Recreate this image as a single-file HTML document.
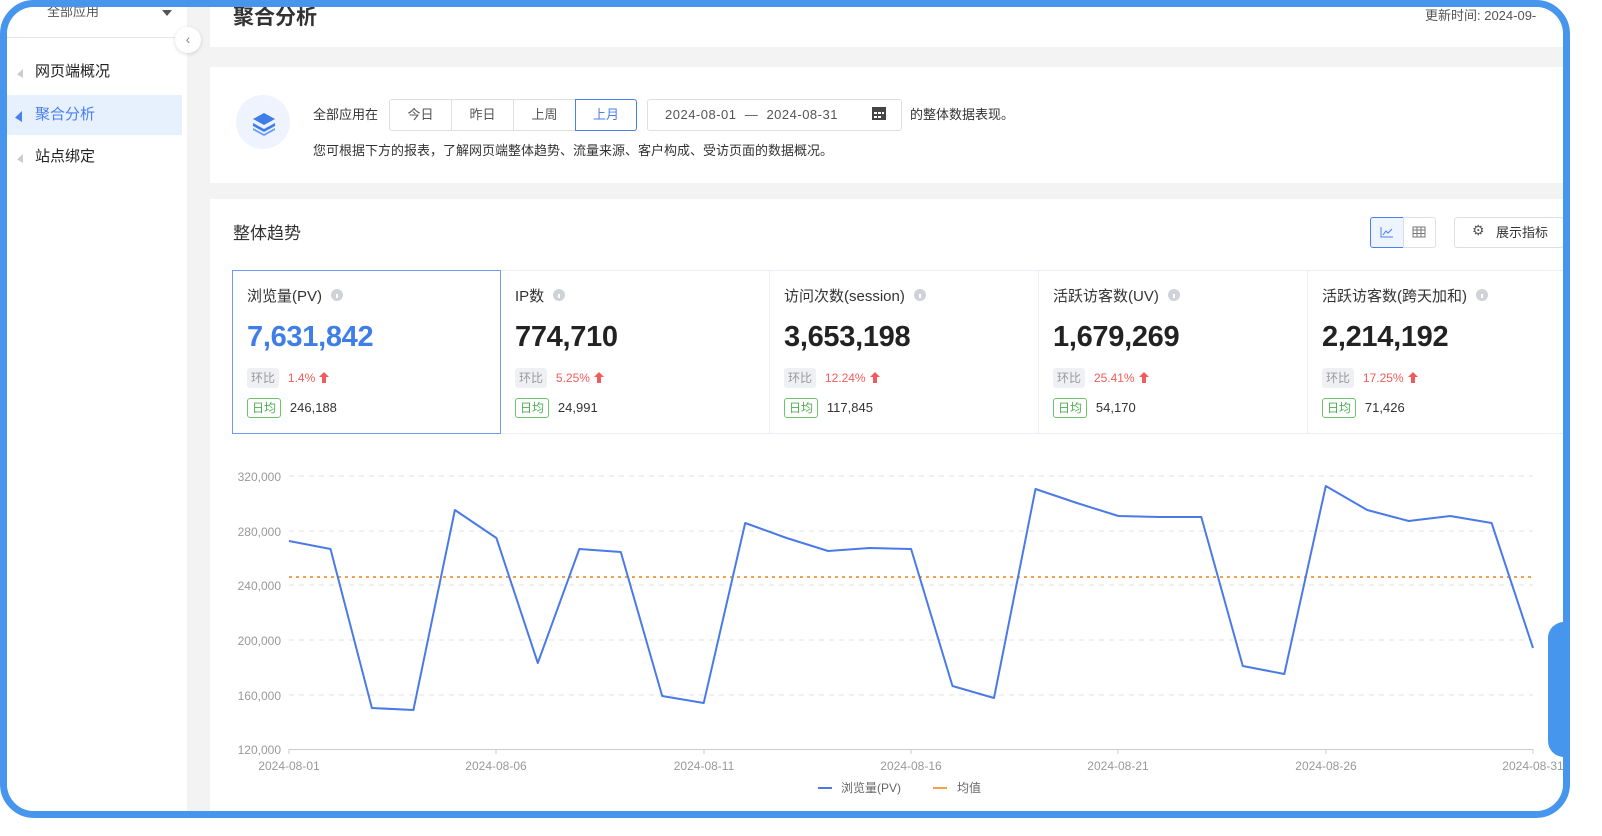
<!DOCTYPE html>
<html><head><meta charset="utf-8">
<style>
*{margin:0;padding:0;box-sizing:border-box}
body{width:1602px;height:836px;background:#fff;font-family:"Liberation Sans","Noto Sans CJK SC",sans-serif;overflow:hidden;position:relative;color:#333;line-height:1.25}
.frame{position:absolute;left:0;top:0;width:1570px;height:818px;border:7px solid #4696ee;border-radius:34px;overflow:hidden;background:#f3f3f4}
.abs{position:absolute}
.side{left:0;top:0;width:180px;height:818px;background:#fff}
.nav{font-size:15px;color:#222;left:28px}
.card{background:#fff}
.t12{font-size:13px;color:#333;line-height:16px}
.btn{position:absolute;top:92px;height:32px;border:1px solid #dcdfe6;font-size:13px;color:#555;text-align:center;line-height:30px}
.mt{font-size:15px;color:#333}
.num{font-size:29px;font-weight:bold;color:#222;letter-spacing:-0.3px}
.hb{display:inline-block;font-size:12px;color:#999;background:#eef0f3;padding:3px 4px;border-radius:3px;line-height:14px}
.red{font-size:12px;color:#f25b5b}
.rj{display:inline-block;font-size:12px;color:#4caf50;border:1px solid #6fc36f;border-radius:3px;padding:2px 4px;line-height:14px}
.dv{font-size:13px;color:#333}
.info{display:inline-block;width:12px;height:12px;border-radius:50%;background:#cfd2d6;vertical-align:0px;margin-left:9px;position:relative}
.info:after{content:"";position:absolute;left:5px;top:5px;width:2px;height:4px;background:#fff}
.ar{display:inline-block;vertical-align:-1px;margin-left:4px}
</style></head><body>
<div class="frame">
 <div class="abs side">
  <div class="abs" style="left:40px;top:-3px;font-size:13px;color:#555">全部应用</div>
  <div class="abs" style="left:155px;top:3px;width:0;height:0;border-left:5px solid transparent;border-right:5px solid transparent;border-top:6px solid #555"></div>
  <div class="abs" style="left:0;top:30px;width:180px;height:1px;background:#e6e6e6"></div>
  <div class="abs nav" style="top:56px">网页端概况</div>
  <div class="abs" style="left:0;top:88px;width:175px;height:40px;background:#e6f1fd"></div>
  <div class="abs nav" style="top:99px;color:#4a7ff0">聚合分析</div>
  <div class="abs nav" style="top:141px">站点绑定</div>
  <div class="abs" style="left:10px;top:62px;width:6px;height:9px;background:#ccc;clip-path:polygon(100% 0,0 60%,100% 100%)"></div>
  <div class="abs" style="left:8px;top:104px;width:7px;height:11px;background:#4a7ff0;clip-path:polygon(100% 0,0 60%,100% 100%)"></div>
  <div class="abs" style="left:10px;top:147px;width:6px;height:9px;background:#ccc;clip-path:polygon(100% 0,0 60%,100% 100%)"></div>
 </div>
 <div class="abs" style="left:168px;top:20px;width:26px;height:26px;border-radius:50%;background:#fff;box-shadow:0 1px 4px rgba(0,0,0,.15);text-align:center;line-height:24px;color:#888;font-size:14px">‹</div>
 <div class="abs card" style="left:203px;top:-10px;width:1360px;height:50px"></div>
 <div class="abs" style="left:226px;top:-2px;font-size:21px;color:#333;font-weight:bold">聚合分析</div>
 <div class="abs" style="left:1418px;top:1px;font-size:13px;color:#555">更新时间: 2024-09-</div>
 <div class="abs card" style="left:203px;top:60px;width:1360px;height:116px"></div>
 <div class="abs" style="left:229px;top:88px;width:54px;height:54px;border-radius:50%;background:#eef3fd"></div>
 <svg class="abs" style="left:244px;top:104px" width="26" height="26" viewBox="0 0 26 26"><path d="M13 2 L24 8 L13 14 L2 8Z" fill="#3f7de8"/><path d="M2 12 L13 18 L24 12 L24 15 L13 21 L2 15Z" fill="#3f7de8"/><path d="M2 17 L13 23 L24 17 L24 19 L13 25 L2 19Z" fill="#6a9bee"/></svg>
 <div class="abs t12" style="left:306px;top:100px">全部应用在</div>
 <div class="btn" style="left:382px;width:63px;border-radius:3px 0 0 3px">今日</div>
 <div class="btn" style="left:444px;width:63px">昨日</div>
 <div class="btn" style="left:506px;width:63px">上周</div>
 <div class="btn" style="left:568px;width:62px;border-color:#4a7ff0;color:#4a7ff0;border-radius:0 3px 3px 0">上月</div>
 <div class="btn" style="left:640px;width:255px;border-radius:3px;text-align:left;padding-left:17px;letter-spacing:0.5px">2024-08-01 &nbsp;— &nbsp;2024-08-31</div>
 <svg class="abs" style="left:864px;top:98px" width="16" height="16"><rect x="1" y="2" width="14" height="13" fill="#444"/><rect x="3" y="7" width="3" height="2" fill="#fff"/><rect x="7" y="7" width="3" height="2" fill="#fff"/><rect x="11" y="7" width="2" height="2" fill="#fff"/><rect x="3" y="11" width="3" height="2" fill="#fff"/><rect x="7" y="11" width="3" height="2" fill="#fff"/></svg>
 <div class="abs t12" style="left:903px;top:100px">的整体数据表现。</div>
 <div class="abs t12" style="left:306px;top:136px">您可根据下方的报表，了解网页端整体趋势、流量来源、客户构成、受访页面的数据概况。</div>
 <div class="abs card" style="left:203px;top:192px;width:1360px;height:630px"></div>
 <div class="abs" style="left:226px;top:216px;font-size:17px;color:#333">整体趋势</div>
 <div class="abs" style="left:1363px;top:210px;width:34px;height:31px;border:1px solid #4a7ff0;background:#eef4fe;border-radius:3px 0 0 3px"></div>
 <svg class="abs" style="left:1373px;top:219px" width="14" height="12"><path d="M1 1V11H13" stroke="#4a7ff0" fill="none"/><path d="M3 9L6 5L8 7L12 3" stroke="#4a7ff0" fill="none"/></svg>
 <div class="abs" style="left:1396px;top:210px;width:33px;height:31px;border:1px solid #dcdfe6;border-radius:0 3px 3px 0"></div>
 <svg class="abs" style="left:1405px;top:219px" width="14" height="12"><rect x="1" y="1" width="12" height="10" stroke="#777" fill="none"/><path d="M1 4H13M1 7.5H13M5 1V11M9 1V11" stroke="#777"/></svg>
 <div class="abs" style="left:1447px;top:210px;width:110px;height:31px;border:1px solid #dcdfe6;border-radius:3px"></div>
 <div class="abs" style="left:1465px;top:215px;font-size:14px;color:#555">⚙</div>
 <div class="abs t12" style="left:1489px;top:218px">展示指标</div>

 <div class="abs" style="left:225px;top:263px;width:1340px;height:1px;background:#ebeef5"></div>
 <div class="abs" style="left:225px;top:426px;width:1340px;height:1px;background:#ebeef5"></div>
 <div class="abs" style="left:762px;top:263px;width:1px;height:164px;background:#ebeef5"></div>
 <div class="abs" style="left:1031px;top:263px;width:1px;height:164px;background:#ebeef5"></div>
 <div class="abs" style="left:1300px;top:263px;width:1px;height:164px;background:#ebeef5"></div>
 <div class="abs" style="left:225px;top:263px;width:269px;height:164px;border:1px solid #6a9cf0"></div>

 <div class="abs" style="left:240px;top:280px"><span class="mt">浏览量(PV)</span><span class="info"></span></div>
 <div class="abs num" style="left:240px;top:312px;color:#3f7de8">7,631,842</div>
 <div class="abs" style="left:240px;top:361px"><span class="hb">环比</span> &nbsp;<span class="red">1.4%</span><svg class="ar" width="10" height="11"><path d="M5 0L10 5H7V11H3V5H0Z" fill="#f25b5b"/></svg></div>
 <div class="abs" style="left:240px;top:391px"><span class="rj">日均</span> &nbsp;<span class="dv">246,188</span></div>

 <div class="abs" style="left:508px;top:280px"><span class="mt">IP数</span><span class="info"></span></div>
 <div class="abs num" style="left:508px;top:312px">774,710</div>
 <div class="abs" style="left:508px;top:361px"><span class="hb">环比</span> &nbsp;<span class="red">5.25%</span><svg class="ar" width="10" height="11"><path d="M5 0L10 5H7V11H3V5H0Z" fill="#f25b5b"/></svg></div>
 <div class="abs" style="left:508px;top:391px"><span class="rj">日均</span> &nbsp;<span class="dv">24,991</span></div>

 <div class="abs" style="left:777px;top:280px"><span class="mt">访问次数(session)</span><span class="info"></span></div>
 <div class="abs num" style="left:777px;top:312px">3,653,198</div>
 <div class="abs" style="left:777px;top:361px"><span class="hb">环比</span> &nbsp;<span class="red">12.24%</span><svg class="ar" width="10" height="11"><path d="M5 0L10 5H7V11H3V5H0Z" fill="#f25b5b"/></svg></div>
 <div class="abs" style="left:777px;top:391px"><span class="rj">日均</span> &nbsp;<span class="dv">117,845</span></div>

 <div class="abs" style="left:1046px;top:280px"><span class="mt">活跃访客数(UV)</span><span class="info"></span></div>
 <div class="abs num" style="left:1046px;top:312px">1,679,269</div>
 <div class="abs" style="left:1046px;top:361px"><span class="hb">环比</span> &nbsp;<span class="red">25.41%</span><svg class="ar" width="10" height="11"><path d="M5 0L10 5H7V11H3V5H0Z" fill="#f25b5b"/></svg></div>
 <div class="abs" style="left:1046px;top:391px"><span class="rj">日均</span> &nbsp;<span class="dv">54,170</span></div>

 <div class="abs" style="left:1315px;top:280px"><span class="mt">活跃访客数(跨天加和)</span><span class="info"></span></div>
 <div class="abs num" style="left:1315px;top:312px">2,214,192</div>
 <div class="abs" style="left:1315px;top:361px"><span class="hb">环比</span> &nbsp;<span class="red">17.25%</span><svg class="ar" width="10" height="11"><path d="M5 0L10 5H7V11H3V5H0Z" fill="#f25b5b"/></svg></div>
 <div class="abs" style="left:1315px;top:391px"><span class="rj">日均</span> &nbsp;<span class="dv">71,426</span></div>

 <svg class="abs" style="left:-7px;top:-7px" width="1602" height="836">
  <g stroke="#e0e0e0" stroke-dasharray="5,5">
   <line x1="289" y1="476" x2="1533" y2="476"/><line x1="289" y1="531" x2="1533" y2="531"/><line x1="289" y1="585" x2="1533" y2="585"/><line x1="289" y1="640" x2="1533" y2="640"/><line x1="289" y1="695" x2="1533" y2="695"/>
  </g>
  <line x1="289" y1="749.5" x2="1533" y2="749.5" stroke="#ccc"/>
  <g stroke="#ccc"><line x1="289" y1="749" x2="289" y2="754"/><line x1="496" y1="749" x2="496" y2="754"/><line x1="704" y1="749" x2="704" y2="754"/><line x1="911" y1="749" x2="911" y2="754"/><line x1="1118" y1="749" x2="1118" y2="754"/><line x1="1326" y1="749" x2="1326" y2="754"/><line x1="1533" y1="749" x2="1533" y2="754"/></g>
  <line x1="289" y1="577" x2="1533" y2="577" stroke="#f5a04a" stroke-width="2" stroke-dasharray="3,4"/>
  <polyline fill="none" stroke="#4a7ae8" stroke-width="2" stroke-linejoin="round" points="289,541 330.5,549 371.9,708 413.4,710 454.9,510 496.4,538 537.8,663 579.3,549 620.8,552 662.2,696 703.7,703 745.2,523 786.6,538 828.1,551 869.6,548 911.1,549 952.5,686 994,698 1035.5,489 1076.9,503 1118.4,516 1159.9,517 1201.3,517 1242.8,666 1284.3,674 1325.8,486 1367.2,510 1408.7,521 1450.2,516 1491.6,523 1533,648"/>
  <g font-family="Liberation Sans,sans-serif" font-size="12" fill="#999" text-anchor="end">
   <text x="281" y="481">320,000</text><text x="281" y="536">280,000</text><text x="281" y="590">240,000</text><text x="281" y="645">200,000</text><text x="281" y="700">160,000</text><text x="281" y="754">120,000</text>
  </g>
  <g font-family="Liberation Sans,sans-serif" font-size="12" fill="#999" text-anchor="middle">
   <text x="289" y="770">2024-08-01</text><text x="496" y="770">2024-08-06</text><text x="704" y="770">2024-08-11</text><text x="911" y="770">2024-08-16</text><text x="1118" y="770">2024-08-21</text><text x="1326" y="770">2024-08-26</text><text x="1533" y="770">2024-08-31</text>
  </g>
  <line x1="818" y1="788" x2="832" y2="788" stroke="#4a7ae8" stroke-width="2"/>
  <text x="841" y="792" font-family="Liberation Sans,Noto Sans CJK SC,sans-serif" font-size="12" fill="#666">浏览量(PV)</text>
  <line x1="933" y1="788" x2="947" y2="788" stroke="#f5a04a" stroke-width="2"/>
  <text x="957" y="792" font-family="Liberation Sans,Noto Sans CJK SC,sans-serif" font-size="12" fill="#666">均值</text>
 </svg>
 <div class="abs" style="left:1541px;top:615px;width:30px;height:135px;background:#4696ee;border-radius:16px 0 0 16px"></div>
</div>
</body></html>
